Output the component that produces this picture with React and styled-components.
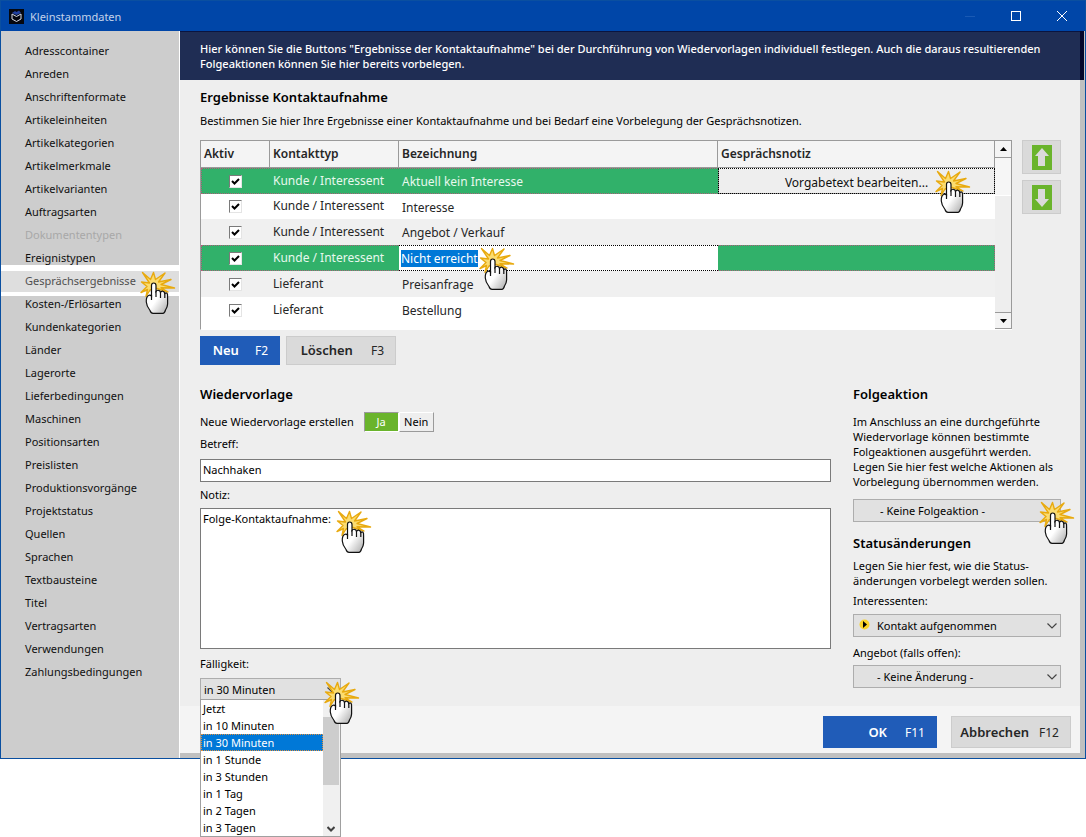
import styled, { createGlobalStyle, css } from "styled-components";
import { useState } from "react";

const GlobalStyle = createGlobalStyle`
  * {
    box-sizing: border-box;
  }
  body {
    margin: 0;
    background-color: white;
    font-family: "Noto Sans", "Open Sans", sans-serif;
    font-size: 11px;
    line-height: 15px;
    color: black;
  }
  button, input, select, textarea {
    font-family: inherit;
    font-size: inherit;
    line-height: inherit;
    color: inherit;
    margin: 0;
    border-radius: 0;
  }
`;

const Page = styled.div`
  min-height: 100vh;
`;
const Window = styled.div`
  border: 1px solid #0a4fa0;
`;
const TitleBar = styled.header`
  display: flex;
  align-items: center;
  height: 30px;
  padding-left: 8px;
  background-color: #0046a8;
  color: #c3d2ea;
`;
const WindowTitle = styled.span`
  flex: 1;
  padding-left: 6px;
`;
const WindowButton = styled.button`
  display: flex;
  align-items: center;
  justify-content: center;
  width: 46px;
  height: 28px;
  padding: 0;
  border: none;
  background-color: transparent;
  color: white;
`;
const Body = styled.div`
  display: flex;
`;

const Sidebar = styled.nav`
  width: 179px;
  flex-shrink: 0;
  padding: 8px 0;
  border-right: 1px solid white;
  background-color: #cdcdcd;
`;
const SideItem = styled.div`
  position: relative;
  height: 23px;
  padding-left: 24px;
  line-height: 23px;
  ${(props) =>
    props.$active &&
    css`
      height: 31px;
      margin: -4px 0;
      border-top: 6px solid white;
      border-bottom: 4px solid white;
      background-color: #dedede;
      line-height: 19px;
    `}
`;
const SideLink = styled.a`
  color: ${(props) => (props.$disabled ? "#a8a8a8" : props.$active ? "#505050" : "#101010")};
  text-decoration: none;
`;

const Main = styled.main`
  flex: 1;
  min-width: 0;
  display: flex;
  flex-direction: column;
  border-right: 5px solid #c0c0c0;
  border-bottom: 5px solid #c0c0c0;
  background-color: #eeeeee;
`;
const Hint = styled.p`
  margin: 0;
  padding: 9px 20px;
  border-top: 1px solid #0a1440;
  background-color: #1f2d54;
  box-shadow: 4px 0 0 #05062a;
  color: white;
  font-weight: 500;
`;
const Content = styled.div`
  flex: 1;
  padding: 9px 19px 5px 20px;
`;
const Heading = styled.h2`
  margin: ${(props) => props.$top || 0}px 0 0;
  font-size: 13px;
  font-weight: 600;
  line-height: 17px;
`;
const Intro = styled.p`
  margin: 7px 0 12px;
`;

const GridArea = styled.div`
  display: flex;
  gap: 10px;
`;
const GridBox = styled.div`
  flex: 1;
  display: flex;
  height: 190px;
  border-top: 1px solid #9a9a9a;
  border-left: 1px solid #9a9a9a;
  border-bottom: 1px solid white;
  background-color: white;
`;
const GridMain = styled.div`
  flex: 1;
`;
const Table = styled.table`
  width: 100%;
  table-layout: fixed;
  border-collapse: separate;
  border-spacing: 0;
  font-size: 12px;
  line-height: 17px;
  color: #262626;
`;
const Th = styled.th`
  width: ${(props) => props.$width || "auto"};
  height: 27px;
  padding: 0 3px 2px;
  border-right: 1px solid #9a9a9a;
  border-bottom: 1px solid #9a9a9a;
  background-color: #f4f4f4;
  text-align: left;
  font-weight: 600;
`;
const Tr = styled.tr`
  height: ${(props) => (props.$short ? "25px" : "26px")};
  background-color: ${(props) => (props.$selected ? "#31b16a" : props.$odd ? "#f0f0f0" : "white")};
  color: ${(props) => (props.$selected ? "#e8f8ee" : "inherit")};
  outline: ${(props) => (props.$selected ? "1px dotted #b0607c" : "none")};
  outline-offset: -1px;
`;
const Td = styled.td`
  position: relative;
  padding: ${(props) => (props.$filled ? "0" : props.$low ? "1px 3px 0" : "0 3px 2px")};
  vertical-align: middle;
`;
const Check = styled.input`
  appearance: none;
  display: block;
  width: 13px;
  height: 13px;
  margin: 2px auto 0;
  border: 1px solid;
  border-color: #7a7a7a #e4e4e4 #e4e4e4 #7a7a7a;
  background: white
    url("data:image/svg+xml,%3Csvg xmlns='http://www.w3.org/2000/svg' viewBox='0 0 11 11'%3E%3Cpath d='M2 5l2.5 2.5L9 3' fill='none' stroke='black' stroke-width='2'/%3E%3C/svg%3E")
    center / 11px 11px;
`;
const CellEditor = styled.div`
  height: 26px;
  padding: 4px 2px 0;
  border-top: 1px dotted black;
  border-bottom: 1px dotted black;
  background-color: white;
`;
const Marked = styled.span`
  display: inline-block;
  height: 17px;
  background-color: #0078d7;
  color: white;
`;
const CellButton = styled.button`
  display: block;
  width: 100%;
  height: 26px;
  padding: 2px 0 0;
  border: 1px solid #8c8c8c;
  border-top-color: white;
  outline: 1px dotted black;
  outline-offset: -1px;
  background-color: #eeeeee;
  color: #101010;
  text-align: center;
`;

const ScrollBar = styled.div`
  display: flex;
  flex-direction: column;
  width: 17px;
  border-right: 1px solid #9a9a9a;
  background-color: #eeeeee;
`;
const ScrollButton = styled.button`
  display: flex;
  align-items: center;
  justify-content: center;
  height: 17px;
  padding: 0;
  border: none;
  border-bottom: 1px solid #9a9a9a;
  border-top: ${(props) => (props.$down ? "1px solid #9a9a9a" : "none")};
  background-color: #f4f4f4;
`;
const ScrollTrack = styled.div`
  flex: 1;
`;
const ScrollGap = styled.div`
  height: 38px;
  border-bottom: 1px solid white;
  background-color: #f6f6f6;
`;

const MoveButtons = styled.div`
  display: flex;
  flex-direction: column;
  gap: 6px;
`;
const MoveButton = styled.button`
  display: flex;
  align-items: center;
  justify-content: center;
  width: 39px;
  height: 34px;
  padding: 0;
  border: 1px solid #cccccc;
  background-color: #dadada;
`;

const ButtonRow = styled.div`
  display: flex;
  gap: ${(props) => props.$gap}px;
  justify-content: ${(props) => (props.$end ? "flex-end" : "flex-start")};
`;
const TableActions = styled(ButtonRow)`
  margin: 6px 0 21px;
`;
const Footer = styled(ButtonRow)`
  padding: 10px 9px 5px;
  background-color: #f4f4f4;
`;
const ActionButton = styled.button`
  display: flex;
  align-items: center;
  justify-content: flex-end;
  gap: ${(props) => props.$gap || 18}px;
  width: ${(props) => props.$width}px;
  height: ${(props) => (props.$tall ? "32px" : "29px")};
  padding: 0 11px;
  border: 1px solid ${(props) => (props.$primary ? "#205cb8" : "#cccccc")};
  background-color: ${(props) => (props.$primary ? "#205cb8" : "#dadada")};
  color: ${(props) => (props.$primary ? "white" : "#262626")};
  font-size: 12px;
`;
const ActionName = styled.span`
  font-size: 13px;
  font-weight: 600;
`;

const Columns = styled.div`
  display: flex;
  gap: 22px;
`;
const FollowUp = styled.section`
  flex: 1;
  min-width: 0;
`;
const Aside = styled.section`
  width: 208px;
`;
const ToggleRow = styled.div`
  display: flex;
  align-items: center;
  gap: 10px;
  margin-top: 8px;
  height: 21px;
`;
const Toggle = styled.div`
  display: flex;
`;
const ToggleButton = styled.button`
  width: 35px;
  height: 20px;
  padding: 0;
  border: 1px solid;
  border-color: ${(props) => (props.$on ? "#9a9a9a white white #9a9a9a" : "white #9a9a9a #9a9a9a white")};
  background-color: ${(props) => (props.$on ? "#6ab42c" : "#eeeeee")};
  color: ${(props) => (props.$on ? "white" : "black")};
`;
const Label = styled.label`
  display: block;
  margin-top: ${(props) => props.$top}px;
`;
const TextInput = styled.input`
  display: block;
  width: 100%;
  height: 23px;
  margin-top: 8px;
  padding: 0 2px 2px;
  border: 1px solid #7a7a7a;
  background-color: white;
`;
const NoteBox = styled.div`
  position: relative;
  margin-top: 6px;
`;
const TextArea = styled.textarea`
  display: block;
  width: 100%;
  height: 141px;
  padding: 2px;
  border: 1px solid #7a7a7a;
  background-color: white;
  resize: none;
`;

const SelectBox = styled.div`
  position: relative;
  margin-top: ${(props) => props.$top}px;
  width: ${(props) => props.$width || "100%"};
`;
const Select = styled.select`
  appearance: none;
  display: block;
  width: 100%;
  height: 23px;
  padding: 0 20px 0 ${(props) => props.$indent}px;
  border: 1px solid #adadad;
  background-color: #e1e1e1;
`;
const SelectArrow = styled.svg`
  position: absolute;
  right: 4px;
  top: 9px;
  pointer-events: none;
`;
const StatusDot = styled.svg`
  position: absolute;
  left: 6px;
  top: 5px;
  pointer-events: none;
`;
const Paragraph = styled.p`
  margin: ${(props) => props.$top}px 0 0;
`;

const DropList = styled.div`
  position: absolute;
  z-index: 1;
  top: 21px;
  left: 0;
  width: 141px;
  display: flex;
  border: 1px solid #a0a0a0;
  background-color: white;
`;
const Options = styled.ul`
  flex: 1;
  margin: 0;
  padding: 0;
  list-style: none;
`;
const Option = styled.li`
  height: 17px;
  padding-left: 1px;
  border: 1px ${(props) => (props.$selected ? "dotted #e09040" : "solid transparent")};
  background-color: ${(props) => (props.$selected ? "#0078d7" : "white")};
  color: ${(props) => (props.$selected ? "white" : "black")};
`;
const ListScroll = styled.div`
  display: flex;
  flex-direction: column;
  align-items: center;
  width: 17px;
  padding: 17px 1px 4px 0;
  background-color: #f0f0f0;
`;
const ListThumb = styled.div`
  width: 100%;
  height: 68px;
  margin-bottom: auto;
  background-color: #cdcdcd;
`;

const Pointer = styled.svg`
  position: absolute;
  z-index: 2;
  left: ${(props) => props.$left};
  right: ${(props) => props.$right};
  top: ${(props) => props.$top};
  pointer-events: none;
`;

const ClickHand = ({ left, right, top }) => (
  <Pointer $left={left} $right={right} $top={top} width="36" height="44" viewBox="0 0 36 44" aria-hidden="true">
    <defs>
      <linearGradient id="hand" x1="0.3" y1="0.3" x2="1" y2="1">
        <stop offset="0.3" stopColor="#ffffff" />
        <stop offset="1" stopColor="#a8a8a8" />
      </linearGradient>
    </defs>
    <path
      d="M2.500 1.500L10.500 8.500L13.500 1.500L15.500 8.500L25 2L18.500 11L31 8.500L21 13.500L34.500 17L21 16.800L28 21L17 17.500L10 19L6 25.500L7.500 18.500L1 21.500L7 15.500L1.500 11L9.500 12Z"
      fill="#fbdc70"
      stroke="#e8aa10"
      strokeWidth="1.4"
      strokeLinejoin="round"
    />
    <path
      d="M11.500 25V14.500Q11.500 12 13.700 12Q16 12 16 14.500V20.500Q17 19 18.500 19.300Q20.300 19.500 20.500 21.500Q21.500 19.800 23 20.300Q24.500 20.500 24.800 22.500Q26 21.300 27 22.300Q27.800 23 27.600 26V33Q27.500 36 25.500 39Q24.500 42.300 23 42.300H13Q11 42.300 10 39.500Q6.500 35 6.300 31Q6 26 8.500 24.500Q10 23.500 11.500 25Z"
      fill="url(#hand)"
      stroke="#111111"
      strokeWidth="1.2"
    />
    <path d="M11.500 24V29M16 20V26M20.500 21V27M24.800 22V27" fill="none" stroke="#111111" strokeWidth="1.2" />
  </Pointer>
);

const Chevron = () => (
  <SelectArrow width="10" height="6" viewBox="0 0 10 6">
    <path d="M0.500 0.500L5 5L9.500 0.500" fill="none" stroke="#444444" strokeWidth="1.2" />
  </SelectArrow>
);

const Arrow = ({ down }) => (
  <svg width="20" height="25" viewBox="0 0 20 25">
    <rect width="20" height="25" fill="#6ab42c" />
    <path
      d={down ? "M6 4H13V14H17L10 22L3 14H6Z" : "M10 3L17 11H13V21H6V11H3Z"}
      fill="#dadada"
    />
  </svg>
);

const categories = [
  "Adresscontainer",
  "Anreden",
  "Anschriftenformate",
  "Artikeleinheiten",
  "Artikelkategorien",
  "Artikelmerkmale",
  "Artikelvarianten",
  "Auftragsarten",
  "Dokumententypen",
  "Ereignistypen",
  "Gesprächsergebnisse",
  "Kosten-/Erlösarten",
  "Kundenkategorien",
  "Länder",
  "Lagerorte",
  "Lieferbedingungen",
  "Maschinen",
  "Positionsarten",
  "Preislisten",
  "Produktionsvorgänge",
  "Projektstatus",
  "Quellen",
  "Sprachen",
  "Textbausteine",
  "Titel",
  "Vertragsarten",
  "Verwendungen",
  "Zahlungsbedingungen",
];

const results = [
  { type: "Kunde / Interessent", name: "Aktuell kein Interesse", selected: true, note: true },
  { type: "Kunde / Interessent", name: "Interesse" },
  { type: "Kunde / Interessent", name: "Angebot / Verkauf" },
  { type: "Kunde / Interessent", name: "Nicht erreicht", selected: true, editing: true },
  { type: "Lieferant", name: "Preisanfrage" },
  { type: "Lieferant", name: "Bestellung" },
];

const dueTimes = [
  "Jetzt",
  "in 10 Minuten",
  "in 30 Minuten",
  "in 1 Stunde",
  "in 3 Stunden",
  "in 1 Tag",
  "in 2 Tagen",
  "in 3 Tagen",
];

const App = () => {
  const [create, setCreate] = useState(true);
  const [due, setDue] = useState("in 30 Minuten");

  return (
    <Page>
      <GlobalStyle />
      <Window>
        <TitleBar>
          <svg width="15" height="15" viewBox="0 0 15 15">
            <rect width="15" height="15" fill="#05070f" />
            <path d="M3 5L7.500 7.500L12 5V10L7.500 12.500L3 10Z" fill="none" stroke="#d8dce8" />
            <path d="M3 4L6 2L7.500 3L10 1.500L12 4L7.500 6Z" fill="#2040a0" />
          </svg>
          <WindowTitle>Kleinstammdaten</WindowTitle>
          <WindowButton aria-label="Minimieren">
            <svg width="10" height="10" viewBox="0 0 10 10">
              <path d="M0 5.500H10" stroke="#1a5ab4" />
            </svg>
          </WindowButton>
          <WindowButton aria-label="Maximieren">
            <svg width="10" height="10" viewBox="0 0 10 10">
              <rect x="0.500" y="0.500" width="9" height="9" fill="none" stroke="currentColor" />
            </svg>
          </WindowButton>
          <WindowButton aria-label="Schließen">
            <svg width="10" height="10" viewBox="0 0 10 10">
              <path d="M0 0L10 10M10 0L0 10" stroke="currentColor" />
            </svg>
          </WindowButton>
        </TitleBar>
        <Body>
          <Sidebar>
            {categories.map((name) => {
              const active = name === "Gesprächsergebnisse";
              return (
                <SideItem key={name} $active={active}>
                  <SideLink href="#" $active={active} $disabled={name === "Dokumententypen"}>
                    {name}
                  </SideLink>
                  {active && <ClickHand left="139px" top="0px" />}
                </SideItem>
              );
            })}
          </Sidebar>
          <Main>
            <Hint>
              Hier können Sie die Buttons "Ergebnisse der Kontaktaufnahme" bei der Durchführung von Wiedervorlagen
              individuell festlegen. Auch die daraus resultierenden Folgeaktionen können Sie hier bereits vorbelegen.
            </Hint>
            <Content>
              <Heading>Ergebnisse Kontaktaufnahme</Heading>
              <Intro>
                Bestimmen Sie hier Ihre Ergebnisse einer Kontaktaufnahme und bei Bedarf eine Vorbelegung der
                Gesprächsnotizen.
              </Intro>
              <GridArea>
                <GridBox>
                  <GridMain>
                    <Table>
                      <thead>
                        <tr>
                          <Th $width="69px">Aktiv</Th>
                          <Th $width="129px">Kontakttyp</Th>
                          <Th>Bezeichnung</Th>
                          <Th $width="277px">Gesprächsnotiz</Th>
                        </tr>
                      </thead>
                      <tbody>
                        {results.map((row, i) => (
                          <Tr key={row.name} $selected={row.selected} $odd={i % 2 === 0} $short={i === 1}>
                            <Td>
                              <Check type="checkbox" defaultChecked aria-label={row.name} />
                            </Td>
                            <Td>{row.type}</Td>
                            {row.editing ? (
                              <Td $filled>
                                <CellEditor>
                                  <Marked>{row.name}</Marked>
                                </CellEditor>
                                <ClickHand left="80px" top="2px" />
                              </Td>
                            ) : (
                              <Td $low>{row.name}</Td>
                            )}
                            <Td $filled>
                              {row.note && (
                                <>
                                  <CellButton>Vorgabetext bearbeiten...</CellButton>
                                  <ClickHand right="24px" top="2px" />
                                </>
                              )}
                            </Td>
                          </Tr>
                        ))}
                      </tbody>
                    </Table>
                  </GridMain>
                  <ScrollBar>
                    <ScrollButton aria-label="Nach oben">
                      <svg width="7" height="4" viewBox="0 0 7 4">
                        <path d="M0 4L3.500 0L7 4Z" />
                      </svg>
                    </ScrollButton>
                    <ScrollGap />
                    <ScrollTrack />
                    <ScrollButton $down aria-label="Nach unten">
                      <svg width="7" height="4" viewBox="0 0 7 4">
                        <path d="M0 0L3.500 4L7 0Z" />
                      </svg>
                    </ScrollButton>
                  </ScrollBar>
                </GridBox>
                <MoveButtons>
                  <MoveButton aria-label="Zeile nach oben">
                    <Arrow />
                  </MoveButton>
                  <MoveButton aria-label="Zeile nach unten">
                    <Arrow down />
                  </MoveButton>
                </MoveButtons>
              </GridArea>
              <TableActions $gap={6}>
                <ActionButton $primary $width={80} $gap={16}>
                  <ActionName>Neu</ActionName>
                  <span>F2</span>
                </ActionButton>
                <ActionButton $width={110}>
                  <ActionName>Löschen</ActionName>
                  <span>F3</span>
                </ActionButton>
              </TableActions>
              <Columns>
                <FollowUp>
                  <Heading>Wiedervorlage</Heading>
                  <ToggleRow>
                    <span>Neue Wiedervorlage erstellen</span>
                    <Toggle>
                      <ToggleButton $on={create} onClick={() => setCreate(true)}>
                        Ja
                      </ToggleButton>
                      <ToggleButton $on={!create} onClick={() => setCreate(false)}>
                        Nein
                      </ToggleButton>
                    </Toggle>
                  </ToggleRow>
                  <Label htmlFor="subject" $top={4}>
                    Betreff:
                  </Label>
                  <TextInput id="subject" defaultValue="Nachhaken" />
                  <Label htmlFor="note" $top={5}>
                    Notiz:
                  </Label>
                  <NoteBox>
                    <TextArea id="note" defaultValue="Folge-Kontaktaufnahme:" />
                    <ClickHand left="136px" top="2px" />
                  </NoteBox>
                  <Label htmlFor="due" $top={7}>
                    Fälligkeit:
                  </Label>
                  <SelectBox $top={7} $width="141px">
                    <Select id="due" $indent={3} value={due} onChange={(e) => setDue(e.target.value)}>
                      {dueTimes.map((time) => (
                        <option key={time}>{time}</option>
                      ))}
                    </Select>
                    <Chevron />
                    <DropList>
                      <Options role="listbox" aria-label="Fälligkeit">
                        {dueTimes.map((time) => (
                          <Option
                            key={time}
                            role="option"
                            aria-selected={time === due}
                            $selected={time === due}
                            onClick={() => setDue(time)}
                          >
                            {time}
                          </Option>
                        ))}
                      </Options>
                      <ListScroll>
                        <ListThumb />
                        <svg width="8" height="6" viewBox="0 0 8 6">
                          <path d="M0.500 1L4 4.500L7.500 1" fill="none" stroke="#404040" strokeWidth="2" />
                        </svg>
                      </ListScroll>
                    </DropList>
                    <ClickHand left="124px" top="3px" />
                  </SelectBox>
                </FollowUp>
                <Aside>
                  <Heading>Folgeaktion</Heading>
                  <Paragraph $top={11}>
                    Im Anschluss an eine durchgeführte
                    <br />
                    Wiedervorlage können bestimmte
                    <br />
                    Folgeaktionen ausgeführt werden.
                    <br />
                    Legen Sie hier fest welche Aktionen als
                    <br />
                    Vorbelegung übernommen werden.
                  </Paragraph>
                  <SelectBox $top={10}>
                    <Select $indent={26} aria-label="Folgeaktion">
                      <option>- Keine Folgeaktion -</option>
                    </Select>
                    <Chevron />
                    <ClickHand left="186px" top="2px" />
                  </SelectBox>
                  <Heading $top={13}>Statusänderungen</Heading>
                  <Paragraph $top={6}>
                    Legen Sie hier fest, wie die Status-
                    <br />
                    änderungen vorbelegt werden sollen.
                  </Paragraph>
                  <Label htmlFor="leads" $top={5}>
                    Interessenten:
                  </Label>
                  <SelectBox $top={6}>
                    <Select id="leads" $indent={23}>
                      <option>Kontakt aufgenommen</option>
                    </Select>
                    <StatusDot width="11" height="11" viewBox="0 0 11 11">
                      <circle cx="5.500" cy="5.500" r="5" fill="#fbd42a" />
                      <path d="M4 2L8 5.500L4 9Z" />
                    </StatusDot>
                    <Chevron />
                  </SelectBox>
                  <Label htmlFor="offer" $top={8}>
                    Angebot (falls offen):
                  </Label>
                  <SelectBox $top={5}>
                    <Select id="offer" $indent={23}>
                      <option>- Keine Änderung -</option>
                    </Select>
                    <Chevron />
                  </SelectBox>
                </Aside>
              </Columns>
            </Content>
            <Footer $gap={14} $end>
              <ActionButton $primary $tall $width={114}>
                <ActionName>OK</ActionName>
                <span>F11</span>
              </ActionButton>
              <ActionButton $tall $width={120} $gap={10}>
                <ActionName>Abbrechen</ActionName>
                <span>F12</span>
              </ActionButton>
            </Footer>
          </Main>
        </Body>
      </Window>
    </Page>
  );
};

export default App;
